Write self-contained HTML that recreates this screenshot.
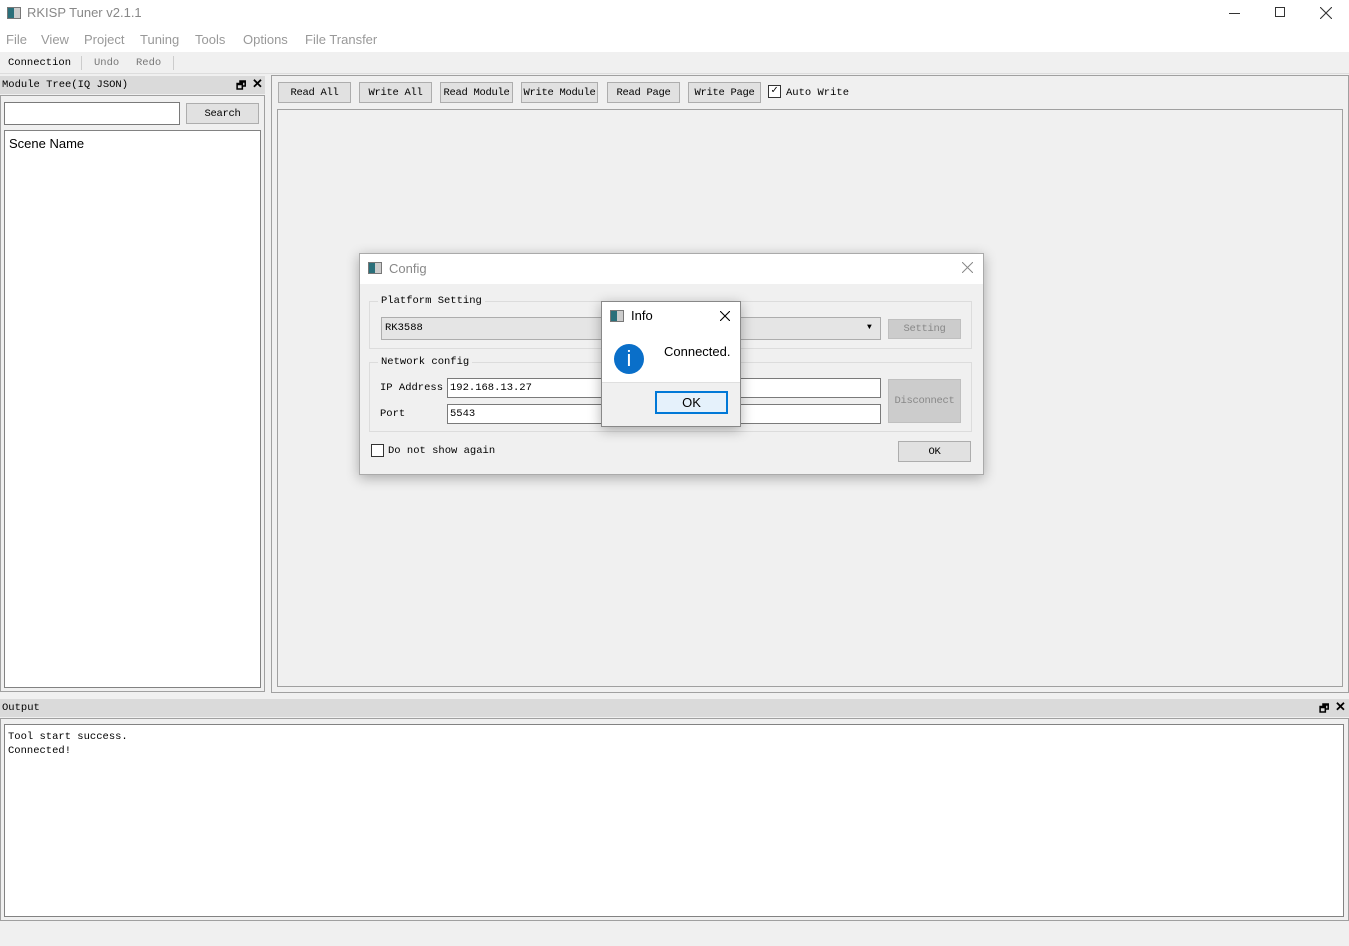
<!DOCTYPE html>
<html><head><style>
*{box-sizing:border-box;margin:0;padding:0}
body{width:1349px;height:946px;background:#f0f0f0;position:relative;overflow:hidden;font-family:"Liberation Mono","DejaVu Sans Mono",monospace;font-size:11px;color:#000}
.a{position:absolute;white-space:nowrap}
.ui{font-family:"Liberation Sans",sans-serif}
.btn{position:absolute;background:#e1e1e1;border:1px solid #adadad;text-align:center;line-height:21px;font-size:10.5px;white-space:nowrap;overflow:hidden;letter-spacing:-0.3px}
.inp{position:absolute;background:#fff;border:1px solid #7a7a7a;padding-left:2px;line-height:18px;font-size:10.5px}
.gray{color:#777}
.m{position:absolute;top:32px;font-family:"Liberation Sans",sans-serif;font-size:13px;color:#999}
</style></head><body>
<!-- title bar -->
<div class="a" style="left:0;top:0;width:1349px;height:52px;background:#fff"></div>
<div class="a" style="left:7px;top:7px;width:14px;height:12px;border:1px solid #777;background:linear-gradient(90deg,#2a6f7a 0 50%,#ccc 50%)"></div>
<div class="a ui" style="left:27px;top:5px;font-size:13px;color:#888">RKISP Tuner v2.1.1</div>
<div class="a" style="left:1229px;top:13px;width:11px;height:1px;background:#333"></div>
<div class="a" style="left:1275px;top:7px;width:10px;height:10px;border:1px solid #333"></div>
<svg class="a" style="left:1320px;top:7px" width="12" height="12"><path d="M0 0L12 12M12 0L0 12" stroke="#333" stroke-width="1.1"/></svg>
<div class="m" style="left:6px">File</div>
<div class="m" style="left:41px">View</div>
<div class="m" style="left:84px">Project</div>
<div class="m" style="left:140px">Tuning</div>
<div class="m" style="left:195px">Tools</div>
<div class="m" style="left:243px">Options</div>
<div class="m" style="left:305px">File Transfer</div>
<!-- toolbar -->
<div class="a" style="left:8px;top:57px;font-size:10.5px">Connection</div>
<div class="a" style="left:81px;top:56px;width:1px;height:14px;background:#ccc"></div>
<div class="a gray" style="left:94px;top:57px;font-size:10.5px">Undo</div>
<div class="a gray" style="left:136px;top:57px;font-size:10.5px">Redo</div>
<div class="a" style="left:173px;top:56px;width:1px;height:14px;background:#ccc"></div>
<div class="a" style="left:0;top:73px;width:1349px;height:1px;background:#ddd"></div>
<!-- left dock -->
<div class="a" style="left:0;top:76px;width:265px;height:18px;background:#dadada"></div>
<div class="a" style="left:2px;top:79px;font-size:10.5px">Module Tree(IQ JSON)</div>
<div class="a ui" style="left:236px;top:77px;font-size:11px;font-weight:bold">🗗</div>
<div class="a ui" style="left:252px;top:76px;font-size:13px;font-weight:bold">✕</div>
<div class="a" style="left:0;top:95px;width:265px;height:597px;border:1px solid #a0a0a0"></div>
<div class="inp" style="left:4px;top:102px;width:176px;height:23px"></div>
<div class="btn" style="left:186px;top:103px;width:73px;height:21px">Search</div>
<div class="a" style="left:4px;top:130px;width:257px;height:558px;background:#fff;border:1px solid #828282"></div>
<div class="a ui" style="left:9px;top:136px;font-size:13px">Scene Name</div>
<!-- right panel -->
<div class="a" style="left:271px;top:75px;width:1078px;height:618px;border:1px solid #a0a0a0"></div>
<div class="btn" style="left:278px;top:82px;width:73px;height:21px">Read All</div>
<div class="btn" style="left:359px;top:82px;width:73px;height:21px">Write All</div>
<div class="btn" style="left:440px;top:82px;width:73px;height:21px">Read Module</div>
<div class="btn" style="left:521px;top:82px;width:77px;height:21px">Write Module</div>
<div class="btn" style="left:607px;top:82px;width:73px;height:21px">Read Page</div>
<div class="btn" style="left:688px;top:82px;width:73px;height:21px">Write Page</div>
<div class="a" style="left:768px;top:85px;width:13px;height:13px;border:1px solid #333;background:#fff;font-size:11px;line-height:11px;text-align:center">✓</div>
<div class="a" style="left:786px;top:87px;font-size:10.5px">Auto Write</div>
<div class="a" style="left:277px;top:109px;width:1066px;height:578px;border:1px solid #a0a0a0"></div>
<!-- output -->
<div class="a" style="left:0;top:699px;width:1349px;height:18px;background:#dadada"></div>
<div class="a" style="left:2px;top:702px;font-size:10.5px">Output</div>
<div class="a ui" style="left:1319px;top:700px;font-size:11px;font-weight:bold">🗗</div>
<div class="a ui" style="left:1335px;top:699px;font-size:13px;font-weight:bold">✕</div>
<div class="a" style="left:0;top:718px;width:1349px;height:203px;border:1px solid #a0a0a0"></div>
<div class="a" style="left:4px;top:724px;width:1340px;height:193px;background:#fff;border:1px solid #828282"></div>
<div class="a" style="left:8px;top:730px;line-height:14px;font-size:10.5px">Tool start success.<br>Connected!</div>
<!-- config dialog -->
<div class="a" style="left:359px;top:253px;width:625px;height:222px;background:#f0f0f0;border:1px solid #aaa;box-shadow:0 3px 12px rgba(0,0,0,.3)"></div>
<div class="a" style="left:360px;top:254px;width:623px;height:30px;background:#fff"></div>
<div class="a" style="left:368px;top:262px;width:14px;height:12px;border:1px solid #777;background:linear-gradient(90deg,#2a6f7a 0 50%,#ccc 50%)"></div>
<div class="a ui" style="left:389px;top:261px;font-size:13px;color:#888">Config</div>
<svg class="a" style="left:962px;top:262px" width="11" height="11"><path d="M0 0L11 11M11 0L0 11" stroke="#888" stroke-width="1"/></svg>
<div class="a" style="left:369px;top:301px;width:603px;height:48px;border:1px solid #dcdcdc"></div>
<div class="a" style="left:378px;top:295px;background:#f0f0f0;padding:0 3px;font-size:10.5px">Platform Setting</div>
<div class="a" style="left:381px;top:317px;width:500px;height:23px;background:#e5e5e5;border:1px solid #adadad;line-height:21px;padding-left:3px;font-size:10.5px">RK3588</div>
<div class="a" style="left:867px;top:323px;font-size:8px">▼</div>
<div class="btn gray" style="left:888px;top:319px;width:73px;height:20px;line-height:19px;background:#ccc;border-color:#bfbfbf;color:#888">Setting</div>
<div class="a" style="left:369px;top:362px;width:603px;height:70px;border:1px solid #dcdcdc"></div>
<div class="a" style="left:378px;top:356px;background:#f0f0f0;padding:0 3px;font-size:10.5px">Network config</div>
<div class="a" style="left:380px;top:382px;font-size:10.5px">IP Address</div>
<div class="inp" style="left:447px;top:378px;width:434px;height:20px">192.168.13.27</div>
<div class="a" style="left:380px;top:408px;font-size:10.5px">Port</div>
<div class="inp" style="left:447px;top:404px;width:434px;height:20px">5543</div>
<div class="btn" style="left:888px;top:379px;width:73px;height:44px;line-height:42px;background:#ccc;border-color:#bfbfbf;color:#888">Disconnect</div>
<div class="a" style="left:371px;top:444px;width:13px;height:13px;border:1px solid #333;background:#fff"></div>
<div class="a" style="left:388px;top:445px;font-size:10.5px">Do not show again</div>
<div class="btn" style="left:898px;top:441px;width:73px;height:21px">OK</div>
<!-- info dialog -->
<div class="a" style="left:601px;top:301px;width:140px;height:126px;background:#f0f0f0;border:1px solid #888;box-shadow:0 3px 12px rgba(0,0,0,.3)"></div>
<div class="a" style="left:602px;top:302px;width:138px;height:80px;background:#fff"></div>
<div class="a" style="left:602px;top:382px;width:138px;height:1px;background:#dfdfdf"></div>
<div class="a" style="left:610px;top:310px;width:14px;height:12px;border:1px solid #777;background:linear-gradient(90deg,#2a6f7a 0 50%,#ccc 50%)"></div>
<div class="a ui" style="left:631px;top:308px;font-size:13px">Info</div>
<svg class="a" style="left:720px;top:311px" width="10" height="10"><path d="M0 0L10 10M10 0L0 10" stroke="#000" stroke-width="1.1"/></svg>
<div class="a ui" style="left:614px;top:344px;width:30px;height:30px;border-radius:50%;background:#0a6fc9;color:#fff;text-align:center;font-size:22px;line-height:30px">i</div>
<div class="a ui" style="left:664px;top:344px;font-size:13px">Connected.</div>
<div class="a" style="left:655px;top:391px;width:73px;height:23px;background:#e5f1fb;border:2px solid #0078d7;text-align:center;line-height:19px;font-family:'Liberation Sans',sans-serif;font-size:13px">OK</div>
</body></html>
